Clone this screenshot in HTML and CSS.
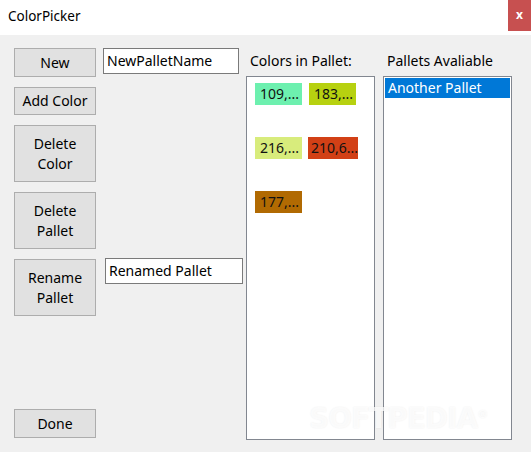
FILE: index.html
```html
<!DOCTYPE html>
<html>
<head>
<meta charset="utf-8">
<link rel="stylesheet" href="styles.css">
</head>
<body>
<div class="window">
  <div class="titlebar">
    <span class="title">ColorPicker</span>
    <div class="close">x</div>
  </div>
  <div class="content">
    <div class="btn r1">New</div>
    <div class="textbox tb1">NewPalletName</div>
    <div class="btn r2">Add Color</div>
    <div class="btn r3">Delete<br>Color</div>
    <div class="btn r4">Delete<br>Pallet</div>
    <div class="btn r5">Rename<br>Pallet</div>
    <div class="textbox tb2">Renamed Pallet</div>
    <div class="btn r7">Done</div>
    <div class="panel colors">
      <div class="label">Colors in Pallet:</div>
      <div class="listbox swatches">
        <div class="swatch c1">109,...</div>
        <div class="swatch c2">183,...</div>
        <div class="swatch c3">216,...</div>
        <div class="swatch c4 wide">210,6...</div>
        <div class="swatch c5">177,...</div>
      </div>
    </div>
    <div class="panel pallets">
      <div class="label">Pallets Avaliable</div>
      <div class="listbox items">
        <div class="item selected">Another Pallet</div>
      </div>
    </div>
    <div class="watermark">SOFTPEDIA<sup>®</sup></div>
  </div>
</div>
</body>
</html>
```
FILE: styles.css
```css
html, body {
  margin: 0;
  padding: 0;
  width: 531px;
  height: 452px;
  overflow: hidden;
}
body {
  font-family: "Noto Sans", "Open Sans", sans-serif;
  font-size: 14px;
  color: #000;
  background: #f0f0f0;
}
.window {
  display: flex;
  flex-direction: column;
  height: 452px;
}
.titlebar {
  flex: 0 0 35px;
  height: 35px;
  background: #fff;
  display: flex;
  align-items: flex-start;
  justify-content: space-between;
}
.title {
  font-size: 13.5px;
  margin: 7px 0 0 8px;
  color: #000;
}
.close {
  width: 23px;
  height: 31px;
  background: #c75050;
  color: #fff;
  font-weight: bold;
  font-size: 12px;
  display: flex;
  align-items: center;
  justify-content: center;
  line-height: 1;
  padding-bottom: 2px;
  box-sizing: border-box;
}
.content {
  flex: 1 1 auto;
  min-height: 0;
  position: relative;
  display: grid;
  grid-template-columns: 82px 136px 129px 129px;
  grid-template-rows: 29px 28px 57px 57px 57px minmax(0, 1fr) 29px;
  column-gap: 7px;
  row-gap: 10px;
  padding: 13px 19px 14px 14px;
  box-sizing: border-box;
}
.content > .panel { grid-row: 1 / 8; margin-bottom: -2px; min-height: 0; }
.colors { grid-column: 3; }
.pallets { grid-column: 4; margin-left: 1px; margin-right: -1px; }
.r1 { grid-row: 1; grid-column: 1; }
.r2 { grid-row: 2; grid-column: 1; }
.r3 { grid-row: 3; grid-column: 1; }
.r4 { grid-row: 4; grid-column: 1; }
.r5 { grid-row: 5; grid-column: 1; }
.r7 { grid-row: 7; grid-column: 1; }
.tb1 { grid-row: 1; grid-column: 2; width: 136px; }
.tb2 { grid-row: 5; grid-column: 2; width: 138px; margin-left: 2px; margin-top: -1px; }
.btn {
  background: #e1e1e1;
  border: 1px solid #adadad;
  box-sizing: border-box;
  display: flex;
  align-items: center;
  justify-content: center;
  text-align: center;
  line-height: 20px;
}
.textbox {
  background: #fff;
  border: 1px solid #7a7a7a;
  box-sizing: border-box;
  height: 26px;
  padding: 0 0 0 3px;
  line-height: 24px;
  white-space: nowrap;
}
.panel {
  display: flex;
  flex-direction: column;
}
.label {
  flex: 0 0 28px;
  padding: 2px 0 0 4px;
  box-sizing: border-box;
  line-height: 22px;
  white-space: nowrap;
}
.listbox {
  flex: 1 1 auto;
  min-height: 0;
  background: #fff;
  border: 1px solid #828790;
  box-sizing: border-box;
}
.swatches {
  display: flex;
  flex-wrap: wrap;
  align-content: flex-start;
  column-gap: 6px;
  row-gap: 32px;
  padding: 6px 0 0 8px;
}
.swatch {
  width: 47px;
  height: 22px;
  line-height: 22px;
  padding-left: 5px;
  box-sizing: border-box;
  white-space: nowrap;
  color: #111;
}
.swatch.wide { width: 50px; padding-left: 3px; }
.c1 { background: rgb(109, 240, 175); }
.c2 { background: rgb(183, 209, 16); margin-left: 1px; }
.c3 { background: rgb(216, 236, 124); }
.c4 { background: rgb(210, 64, 22); }
.c5 { background: rgb(177, 106, 2); }
.items { padding: 1px; }
.item {
  height: 20px;
  line-height: 20px;
  padding-left: 3px;
  white-space: nowrap;
}
.selected {
  background: #0078d7;
  color: #fff;
}
.watermark {
  position: absolute;
  left: 309px;
  top: 367px;
  font-family: "DejaVu Sans", sans-serif;
  font-weight: bold;
  font-size: 28px;
  letter-spacing: -1px;
  color: rgba(255, 255, 255, 0.75);
  text-shadow: 0 0 2px rgba(0, 0, 0, 0.07);
  pointer-events: none;
}
.watermark sup { font-size: 11px; }
```
